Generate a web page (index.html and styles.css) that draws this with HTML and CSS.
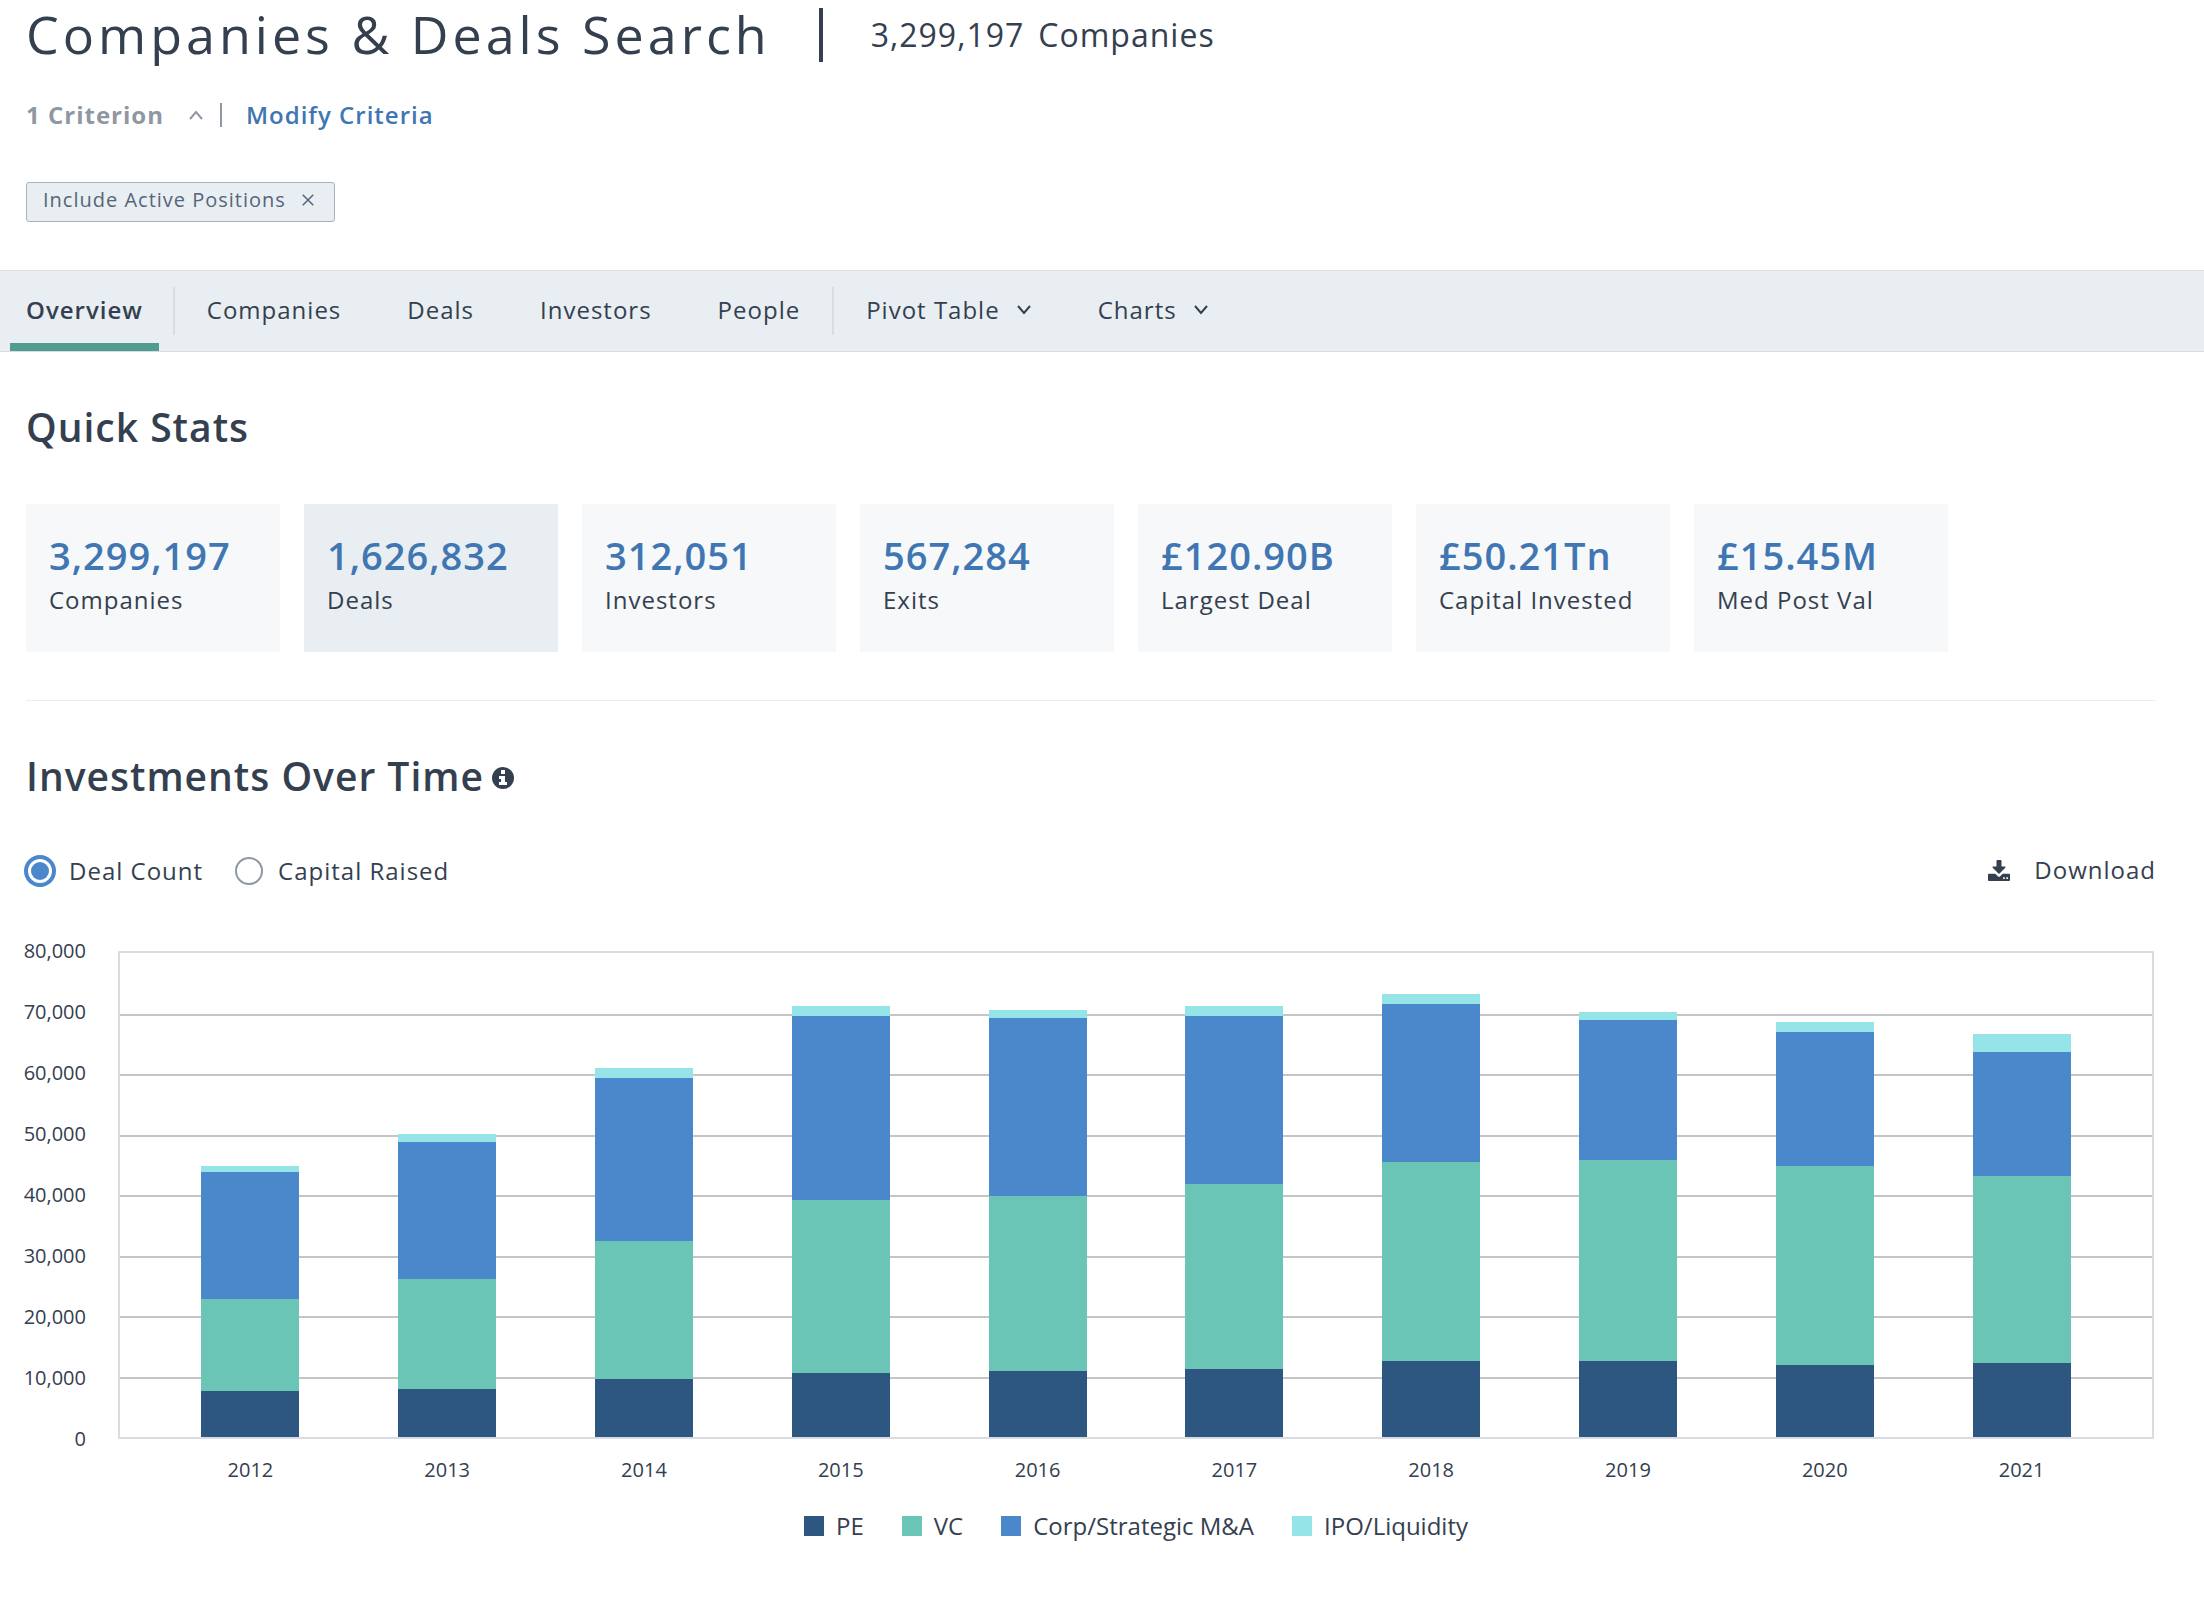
FILE: index.html
```html
<!DOCTYPE html>
<html lang="en">
<head>
<meta charset="utf-8">
<meta name="viewport" content="width=device-width, initial-scale=1">
<title>Companies &amp; Deals Search</title>
<link rel="stylesheet" href="styles.css">
</head>
<body>
<header class="page-header">
  <div class="title-row">
    <h1 class="page-title">Companies &amp; Deals Search</h1>
    <p class="result-count"><span>3,299,197</span> <span>Companies</span></p>
  </div>
  <div class="criteria-row">
    <button type="button" class="criteria-toggle">1 Criterion
      <svg class="chevron" viewBox="0 0 16 10" aria-hidden="true"><path d="M2 9l6-7 6 7"/></svg>
    </button>
    <a class="criteria-link" href="#criteria">Modify Criteria</a>
  </div>
  <div class="chip">
    <span>Include Active Positions</span>
    <button type="button" class="chip-close" aria-label="Remove"><svg viewBox="0 0 16 16" aria-hidden="true"><path d="M1 1l14 14M15 1L1 15"/></svg></button>
  </div>
</header>

<nav class="tabs">
  <div class="tab-group"><a class="tab tab-active" href="#overview">Overview</a></div>
  <div class="tab-group">
    <a class="tab" href="#companies">Companies</a>
    <a class="tab" href="#deals">Deals</a>
    <a class="tab" href="#investors">Investors</a>
    <a class="tab" href="#people">People</a>
  </div>
  <div class="tab-group">
    <button type="button" class="tab">Pivot Table <svg class="chevron" viewBox="0 0 16 10" aria-hidden="true"><path d="M2 1l6 7 6-7"/></svg></button>
    <button type="button" class="tab">Charts <svg class="chevron" viewBox="0 0 16 10" aria-hidden="true"><path d="M2 1l6 7 6-7"/></svg></button>
  </div>
</nav>

<main class="content">
  <section class="stats-section">
    <h2 class="section-title">Quick Stats</h2>
    <div class="stats">
      <a class="stat" href="#companies"><span class="stat-value">3,299,197</span><span class="stat-label">Companies</span></a>
      <a class="stat stat-active" href="#deals"><span class="stat-value">1,626,832</span><span class="stat-label">Deals</span></a>
      <a class="stat" href="#investors"><span class="stat-value">312,051</span><span class="stat-label">Investors</span></a>
      <a class="stat" href="#exits"><span class="stat-value">567,284</span><span class="stat-label">Exits</span></a>
      <a class="stat" href="#largest-deal"><span class="stat-value">£120.90B</span><span class="stat-label">Largest Deal</span></a>
      <a class="stat" href="#capital-invested"><span class="stat-value">£50.21Tn</span><span class="stat-label">Capital Invested</span></a>
      <a class="stat" href="#post-valuation"><span class="stat-value">£15.45M</span><span class="stat-label">Med Post Val</span></a>
    </div>
  </section>

  <section class="investments">
    <h2 class="section-title">Investments Over Time
      <svg class="info" viewBox="0 0 22 22" aria-hidden="true"><circle cx="11" cy="11" r="11" fill="#34404f"/><path fill="#fff" d="M9 3h4v4H9zM7 9h6v6h2v3H7v-3h2v-3H7z"/></svg>
    </h2>
    <div class="chart-controls">
      <label class="option"><input type="radio" name="metric" checked>Deal Count</label>
      <label class="option"><input type="radio" name="metric">Capital Raised</label>
      <button type="button" class="download">
        <svg viewBox="0 0 22 21" aria-hidden="true"><path fill="#34404f" d="M8.5 1Q8.500 0 9.500 0h3q1 0 1 1v5.500H17q1 .3.300 1.200L11.500 13.600q-.5.500-1 0L4.700 7.700Q4 6.800 5 6.500h3.500z"/><path fill="#34404f" fill-rule="evenodd" d="M1 13.800h6.200l3 2.800q.8.700 1.600 0l3-2.800H21q1 0 1 1V20q0 1-1 1H1q-1 0-1-1v-5.200q0-1 1-1zM15.200 17.300v1.600h1.600v-1.600zM18.400 17.300v1.600H20v-1.600z"/></svg>
        Download
      </button>
    </div>

    <div class="chart">
      <div class="y-axis">
        <span>80,000</span><span>70,000</span><span>60,000</span><span>50,000</span><span>40,000</span><span>30,000</span><span>20,000</span><span>10,000</span><span>0</span>
      </div>
      <div class="plot">
        <div class="grid-lines"><i></i><i></i><i></i><i></i><i></i><i></i><i></i><i></i></div>
        <div class="bars" id="bars"></div>
      </div>
      <div class="x-axis">
        <span>2012</span><span>2013</span><span>2014</span><span>2015</span><span>2016</span><span>2017</span><span>2018</span><span>2019</span><span>2020</span><span>2021</span>
      </div>
      <ul class="legend">
        <li><i class="swatch pe"></i>PE</li>
        <li><i class="swatch vc"></i>VC</li>
        <li><i class="swatch corp"></i>Corp/Strategic M&amp;A</li>
        <li><i class="swatch ipo"></i>IPO/Liquidity</li>
      </ul>
    </div>
  </section>
</main>
<script src="chart.js"></script>
</body>
</html>
```
FILE: chart.js
```js
// Deal counts per year: PE, VC, Corp/Strategic M&A, IPO/Liquidity
const AXIS_MAX = 80000;
const KEYS = ["pe", "vc", "corp", "ipo"];
const DEALS = [
  [7590, 15175, 21110, 990],
  [7920, 18140, 22760, 1320],
  [9570, 22760, 27050, 1650],
  [10560, 28700, 30350, 1650],
  [10890, 29030, 29360, 1320],
  [11220, 30680, 27710, 1650],
  [12540, 32990, 26060, 1650],
  [12540, 33320, 23090, 1320],
  [11880, 32990, 22100, 1650],
  [12210, 31010, 20450, 2970]
];

const bars = document.getElementById("bars");
for (const year of DEALS) {
  const bar = document.createElement("div");
  bar.className = "bar";
  year.forEach((count, i) => {
    const part = document.createElement("div");
    part.className = KEYS[i];
    part.style.height = (count / AXIS_MAX) * 100 + "%";
    bar.append(part);
  });
  bars.append(bar);
}
```
FILE: styles.css
```css
:root {
  --ink: #34404f;
  --muted: #8f97a3;
  --blue: #4076b1;
  --tint: #e9eef2;
  --rule: #d9dde1;
}

* { box-sizing: border-box; }

body {
  margin: 0;
  background: #fff;
  color: var(--ink);
  font: 24px/32px "Open Sans", "Noto Sans", sans-serif;
  letter-spacing: 1px;
}

h1, h2, p, ul { margin: 0; padding: 0; }

a { color: inherit; text-decoration: none; }

button {
  margin: 0;
  padding: 0;
  border: 0;
  background: none;
  color: inherit;
  font: inherit;
  letter-spacing: inherit;
  cursor: pointer;
}

.chevron {
  width: 16px;
  height: 10px;
  fill: none;
  stroke: currentColor;
  stroke-width: 2;
}

.page-header { padding: 0 48px 48px 26px; }

.title-row {
  display: flex;
  align-items: center;
  gap: 48px;
  height: 70px;
}

.page-title {
  padding-bottom: 2px;
  font-size: 52px;
  font-weight: 400;
  line-height: 68px;
  letter-spacing: 4px;
}

.result-count {
  display: flex;
  align-items: center;
  gap: 14px;
  height: 54px;
  padding-left: 48px;
  border-left: 4px solid var(--ink);
  font-size: 32px;
}

.criteria-row {
  display: flex;
  align-items: center;
  gap: 16px;
  margin-top: 29px;
}

.criteria-toggle {
  display: flex;
  align-items: center;
  gap: 24px;
  color: var(--muted);
  font-weight: 700;
}

.criteria-link {
  display: flex;
  align-items: center;
  gap: 24px;
  color: var(--blue);
  font-weight: 600;
}

.criteria-link::before {
  content: "";
  width: 2px;
  height: 24px;
  background: var(--muted);
}

.chip {
  display: flex;
  align-items: center;
  gap: 16px;
  width: fit-content;
  height: 40px;
  margin-top: 51px;
  padding: 0 20px 4px 16px;
  border: 1px solid #a9b2bc;
  border-radius: 3px;
  background: var(--tint);
  color: #566579;
  font-size: 20px;
}

.chip-close { display: flex; }

.chip-close svg {
  width: 12px;
  height: 12px;
  fill: none;
  stroke: currentColor;
  stroke-width: 2;
}

.tabs {
  display: flex;
  align-items: center;
  padding-left: 10px;
  height: 82px;
  border: solid var(--rule);
  border-width: 1px 0;
  background: var(--tint);
}

.tab-group {
  display: flex;
  align-items: center;
  gap: 34px;
  height: 48px;
  padding: 0 16px;
}

.tab-group:first-child { padding: 0 14px 0 0; }

.tab-group + .tab-group { border-left: 2px solid var(--rule); }

.tab {
  display: flex;
  align-items: center;
  gap: 16px;
  height: 80px;
  padding: 0 16px 2px;
}

.tab-active {
  padding-top: 6px;
  border-bottom: 8px solid #529b91;
  padding-bottom: 0;
  font-weight: 600;
}

.content { padding: 0 48px 32px 26px; }

.section-title {
  display: flex;
  align-items: center;
  gap: 8px;
  font-size: 39px;
  font-weight: 600;
  line-height: 52px;
}

.stats-section {
  padding: 49px 0 48px;
  border-bottom: 1px solid var(--tint);
}

.stats {
  display: grid;
  grid-template-columns: repeat(7, 254px);
  gap: 24px;
  margin-top: 51px;
}

.stat {
  display: flex;
  flex-direction: column;
  height: 148px;
  padding: 25px 23px;
  background: #f7f8fa;
}

.stat-active { background: var(--tint); }

.stat-value {
  color: var(--blue);
  font-size: 38px;
  font-weight: 600;
  line-height: 52px;
}

.stat-label { padding-top: 3px; }

.investments { padding-top: 49px; }

.info {
  width: 22px;
  height: 22px;
  margin-top: 4px;
}

.chart-controls {
  display: flex;
  align-items: center;
  gap: 32px;
  margin-top: 52px;
}

.option {
  display: flex;
  align-items: center;
  gap: 15px;
}

.option input {
  appearance: none;
  width: 28px;
  height: 28px;
  margin: 0;
  padding: 3px;
  border: 2px solid var(--muted);
  border-radius: 50%;
}

.option input:checked {
  border-color: #4a88cb;
  box-shadow: 0 0 0 2px #4a88cb;
  background: #4a88cb content-box;
}

.download {
  display: flex;
  align-items: center;
  gap: 24px;
  margin-left: auto;
  padding-bottom: 2px;
}

.download svg {
  width: 22px;
  height: 21px;
}

.chart {
  display: grid;
  grid-template-columns: 60px 1fr;
  column-gap: 32px;
  margin-top: 63px;
  padding-right: 2px;
  letter-spacing: 0;
}

.y-axis {
  display: flex;
  flex-direction: column;
  justify-content: space-between;
  align-items: flex-end;
  margin: -14px 0;
  font-size: 20px;
  line-height: 28px;
}

.plot {
  display: grid;
  height: 488px;
  border: 2px solid var(--rule);
}

.grid-lines, .bars { grid-area: 1 / 1; }

.grid-lines {
  display: grid;
  grid-template-rows: repeat(8, 1fr);
}

.grid-lines i + i { border-top: 2px solid #c5c5c5; }

.bars, .x-axis {
  display: grid;
  grid-template-columns: repeat(10, 1fr);
  justify-items: center;
  padding: 0 32px;
}

.bar {
  display: flex;
  flex-direction: column-reverse;
  width: 98px;
  height: 100%;
}

.pe { background: #2d5681; }
.vc { background: #6ac5b6; }
.corp { background: #4a88cb; }
.ipo { background: #95e4e8; }

.x-axis {
  grid-column: 2;
  margin-top: 17px;
  padding: 0 34px;
  font-size: 20px;
  line-height: 28px;
}

.legend {
  grid-column: 2;
  display: flex;
  justify-content: center;
  gap: 38px;
  margin-top: 26px;
  list-style: none;
}

.legend li {
  display: flex;
  align-items: center;
  gap: 12px;
}

.swatch {
  width: 20px;
  height: 20px;
}
```
